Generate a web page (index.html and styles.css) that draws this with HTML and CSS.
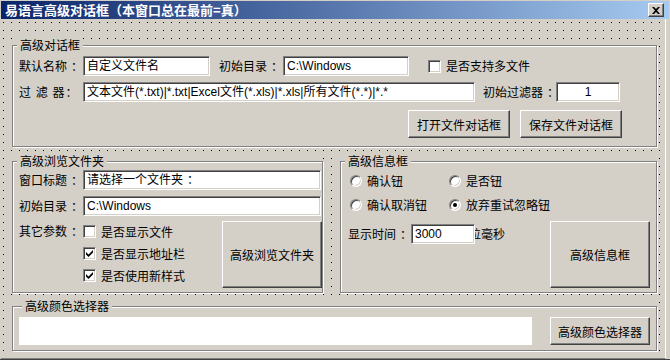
FILE: index.html
```html
<!DOCTYPE html>
<html lang="zh-CN">
<head>
<meta charset="utf-8">
<title>易语言高级对话框</title>
<link rel="stylesheet" href="styles.css">
</head>
<body>
<div class="window">
  <div class="titlebar">
    <span class="title">易语言高级对话框（本窗口总在最前=真）</span>
    <button class="close" aria-label="关闭">
      <svg width="8" height="7" viewBox="0 0 8 7"><path d="M0 0h2l2 2 2-2h2L5 3.5 8 7H6L4 5 2 7H0l3-3.5z" fill="#000"/></svg>
    </button>
  </div>
  <div class="client">
    <div class="gbox g1">
      <div class="group">
        <span class="legend">高级对话框</span>
        <div class="row r1">
          <span class="lbl">默认名称<span class="colon">：</span></span>
          <div class="edit w127">自定义文件名</div>
          <span class="lbl ml9">初始目录<span class="colon">：</span></span>
          <div class="edit w126">C:\Windows</div>
          <span class="cb ml19"></span>
          <span class="cbtext">是否支持多文件</span>
        </div>
        <div class="row r2">
          <span class="lbl lbl-spaced">过 滤 器<span class="colon">：</span></span>
          <div class="edit w392">文本文件(*.txt)|*.txt|Excel文件(*.xls)|*.xls|所有文件(*.*)|*.*</div>
          <span class="lbl lbl73 ml8">初始过滤器<span class="colon">：</span></span>
          <div class="edit w64 center">1</div>
        </div>
        <div class="row r3">
          <button class="btn bfile">打开文件对话框</button>
          <button class="btn bfile ml10">保存文件对话框</button>
        </div>
      </div>
    </div>

    <div class="middle">
      <div class="gbox g2">
        <div class="group">
          <span class="legend">高级浏览文件夹</span>
          <div class="row g2r1">
            <span class="lbl">窗口标题<span class="colon">：</span></span>
            <div class="edit w238">请选择一个文件夹<span class="colon">：</span></div>
          </div>
          <div class="row g2r2">
            <span class="lbl">初始目录<span class="colon">：</span></span>
            <div class="edit w238">C:\Windows</div>
          </div>
          <div class="row g2r3">
            <span class="lbl lbl-other">其它参数<span class="colon">：</span></span>
            <div class="cblist">
              <div class="cbitem"><span class="cb"></span><span class="cbtext">是否显示文件</span></div>
              <div class="cbitem"><span class="cb"><svg width="7" height="7" viewBox="0 0 7 7"><path d="M0 2l2.5 2.5L7 0v2.5L2.5 7 0 4.5z" fill="#000"/></svg></span><span class="cbtext">是否显示地址栏</span></div>
              <div class="cbitem"><span class="cb"><svg width="7" height="7" viewBox="0 0 7 7"><path d="M0 2l2.5 2.5L7 0v2.5L2.5 7 0 4.5z" fill="#000"/></svg></span><span class="cbtext">是否使用新样式</span></div>
            </div>
            <button class="btn bbig">高级浏览文件夹</button>
          </div>
        </div>
      </div>

      <div class="gbox g3">
        <div class="group">
          <span class="legend">高级信息框</span>
          <div class="row radios rr1">
            <div class="ritem"><span class="radio"></span><span class="rtext">确认钮</span></div>
            <div class="ritem"><span class="radio"></span><span class="rtext">是否钮</span></div>
          </div>
          <div class="row radios rr2">
            <div class="ritem"><span class="radio"></span><span class="rtext">确认取消钮</span></div>
            <div class="ritem"><span class="radio on"><span class="dot"></span></span><span class="rtext">放弃重试忽略钮</span></div>
          </div>
          <div class="row g3r3">
            <span class="lbl lbl-time">显示时间<span class="colon">：</span></span>
            <div class="edit w64 timeedit">3000</div>
            <span class="unit">位毫秒</span>
            <button class="btn bbig bmsg">高级信息框</button>
          </div>
        </div>
      </div>
    </div>

    <div class="gbox g4">
      <div class="group">
        <span class="legend legend4">高级颜色选择器</span>
        <div class="row g4r">
          <div class="swatch"></div>
          <button class="btn bcolor">高级颜色选择器</button>
        </div>
      </div>
    </div>
  </div>
</div>
</body>
</html>
```

FILE: styles.css
```css
* { box-sizing: border-box; }

html, body {
  margin: 0;
  padding: 0;
  background: #d4d0c8;
}

body {
  font-family: "Noto Sans CJK SC", sans-serif;
  font-size: 12px;
  color: #000;
}

.colon {
  display: inline-block;
  padding-left: 4px;
  margin-right: -4px;
}

.window {
  width: 670px;
  height: 360px;
  padding: 1px 0 0 1px;
  display: flex;
  flex-direction: column;
  background: #d4d0c8;
  border-bottom: 1px solid #404040;
}

.titlebar {
  flex: none;
  height: 18px;
  margin-right: 1px;
  display: flex;
  align-items: center;
  padding: 0 5px 0 4px;
  background: linear-gradient(to right, #0a246a, #a6caf0);
}

.title {
  flex: 1;
  color: #fff;
  font-weight: bold;
  font-size: 13px;
  line-height: 18px;
  white-space: nowrap;
}

.close {
  width: 16px;
  height: 14px;
  padding: 0;
  display: flex;
  align-items: center;
  justify-content: center;
  background: #d4d0c8;
  border: 1px solid;
  border-color: #fff #404040 #404040 #fff;
  box-shadow: inset -1px -1px #808080;
}

.client {
  flex: 1;
  margin-right: 4px;
  padding: 10px 0 0 9px;
  border-right: 1px solid #fff;
  border-bottom: 1px solid #808080;
  background-color: #d4d0c8;
  background-image:
    linear-gradient(to bottom, transparent 1px, #d4d0c8 1px),
    linear-gradient(to right, #000 1px, transparent 1px);
  background-size: 8px 8px, 8px 8px;
  background-position: 2px 3px, 2px 3px;
}

/* group boxes */
.gbox {
  flex: none;
  padding-left: 2px;
  background: #d4d0c8;
}

.group {
  display: flex;
  flex-direction: column;
  border: 1px solid #808080;
  box-shadow: inset 1px 1px #fff, 1px 1px #fff;
}

.legend {
  align-self: flex-start;
  height: 14px;
  line-height: 14px;
  margin: -8px 0 0 4px;
  padding: 0 3px;
  background: #d4d0c8;
  white-space: nowrap;
}

.g1 .legend,
.g2 .legend { margin-left: -2px; }

.g4 .legend4 { margin-left: 3px; }

.row {
  flex: none;
  display: flex;
  align-items: center;
}

.lbl {
  flex: none;
  width: 64px;
  line-height: 14px;
  white-space: nowrap;
}

.lbl-spaced { word-spacing: 2px; }
.lbl-spaced .colon { padding-left: 1px; margin-right: -1px; }

.lbl73 { width: 73px; }

.ml8 { margin-left: 8px; }
.ml9 { margin-left: 9px; }
.ml10 { margin-left: 10px; }
.ml19 { margin-left: 19px; }

.edit {
  flex: none;
  height: 20px;
  padding: 0 0 0 3px;
  background: #fff;
  border: 1px solid;
  border-color: #808080 #fff #fff #808080;
  box-shadow: inset 1px 1px #404040, inset -1px -1px #d4d0c8;
  font-family: "Liberation Sans", "Noto Sans CJK SC", sans-serif;
  font-size: 12px;
  line-height: 18px;
  white-space: nowrap;
  overflow: hidden;
}

.center { text-align: center; padding-left: 0; }

.w64 { width: 64px; }
.w126 { width: 126px; }
.w127 { width: 127px; }
.w238 { width: 238px; }
.w392 { width: 392px; }

.cb {
  flex: none;
  width: 13px;
  height: 13px;
  display: flex;
  align-items: center;
  justify-content: center;
  background: #fff;
  border: 1px solid;
  border-color: #808080 #fff #fff #808080;
  box-shadow: inset 1px 1px #404040, inset -1px -1px #d4d0c8;
}

.cbtext {
  margin-left: 5px;
  line-height: 14px;
  white-space: nowrap;
}

.btn {
  flex: none;
  padding: 0;
  background: #d4d0c8;
  border: 1px solid;
  border-color: #fff #404040 #404040 #fff;
  box-shadow: inset -1px -1px #808080;
  font-family: "Noto Sans CJK SC", sans-serif;
  font-size: 12px;
  color: #000;
  white-space: nowrap;
}

/* group 1 */
.g1 {
  width: 647px;
  margin-top: 10px;
  padding-top: 6px;
}

.g1 .group {
  height: 102px;
  padding-left: 6px;
}

.r1 { margin-top: 4px; height: 20px; }
.r2 { margin-top: 6px; height: 20px; }
.r3 { margin-top: 8px; height: 28px; }

.bfile { width: 102px; height: 28px; }
.r3 .bfile:first-child { margin-left: 389px; }

/* middle row */
.middle {
  flex: none;
  display: flex;
  align-items: flex-start;
  margin-top: 7px;
}

.g2 {
  width: 313px;
  padding-top: 7px;
}

.g2 .group,
.g3 .group {
  height: 132px;
}

.g2 .group { padding-left: 6px; }

.g2r1 { margin-top: 2px; height: 20px; }
.g2r2 { margin-top: 6px; height: 20px; }

.g2r3 {
  margin-top: 5px;
  height: 67px;
  align-items: flex-start;
}

.lbl-other { margin-top: 3px; }

.cblist {
  display: flex;
  flex-direction: column;
  gap: 9px;
  margin-top: 4px;
}

.cbitem {
  display: flex;
  align-items: center;
  height: 13px;
}

.bbig {
  width: 100px;
  height: 67px;
  margin-left: auto;
}

.g3 {
  width: 319px;
  margin-left: 15px;
  padding-top: 7px;
}

.radios {
  height: 12px;
  padding-left: 9px;
}

.rr1 { margin-top: 7px; }
.rr2 { margin-top: 12px; }

.ritem {
  width: 99px;
  display: flex;
  align-items: center;
}

.radio {
  flex: none;
  width: 12px;
  height: 12px;
  border-radius: 50%;
  display: flex;
  align-items: center;
  justify-content: center;
  background: #fff;
  border: 1px solid;
  border-color: #808080 #fff #fff #808080;
  box-shadow: inset 1px 1px #404040, inset -1px -1px #d4d0c8;
}

.dot {
  width: 4px;
  height: 4px;
  border-radius: 50%;
  background: #000;
}

.rtext {
  margin-left: 5px;
  line-height: 14px;
  white-space: nowrap;
}

.g3r3 {
  margin-top: 10px;
  height: 67px;
  padding-left: 7px;
  align-items: flex-start;
}

.lbl-time {
  width: 63px;
  margin-top: 6px;
}

.timeedit {
  margin-top: 3px;
  position: relative;
  z-index: 1;
}

.unit {
  margin: 6px 0 0 -6px;
  line-height: 14px;
  white-space: nowrap;
}

.bmsg { margin-right: 6px; }

/* group 4 */
.g4 {
  width: 647px;
  margin-top: 6px;
  padding-top: 7px;
}

.g4 .group {
  height: 45px;
  padding-left: 6px;
}

.g4r {
  margin-top: 4px;
  height: 28px;
}

.swatch {
  flex: none;
  width: 513px;
  height: 28px;
  background: #fff;
}

.bcolor {
  width: 100px;
  height: 28px;
  margin-left: 18px;
}
```
